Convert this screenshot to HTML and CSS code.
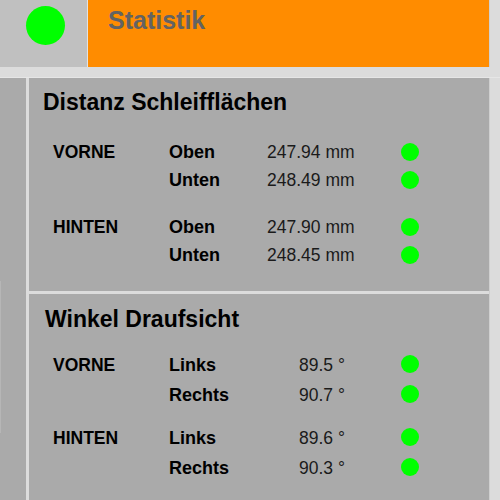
FILE: index.html
```html
<!DOCTYPE html>
<html>
<head>
<meta charset="utf-8">
<link rel="stylesheet" href="styles.css">
</head>
<body>
<div class="top">
  <div class="status"><span class="lamp"></span></div>
  <div class="title-bar"><span class="title">Statistik</span></div>
  <div class="top-rest"></div>
</div>
<div class="main">
  <div class="side"><div class="side-line"></div></div>
  <div class="panels">
    <section class="panel p1">
      <h2 class="ptitle">Distanz Schleifflächen</h2>
      <div class="group">
        <div class="row"><span class="grp">VORNE</span><span class="sub">Oben</span><span class="val">247.94 mm</span><span class="dot"></span></div>
        <div class="row"><span class="grp"></span><span class="sub">Unten</span><span class="val">248.49 mm</span><span class="dot"></span></div>
      </div>
      <div class="group">
        <div class="row"><span class="grp">HINTEN</span><span class="sub">Oben</span><span class="val">247.90 mm</span><span class="dot"></span></div>
        <div class="row"><span class="grp"></span><span class="sub">Unten</span><span class="val">248.45 mm</span><span class="dot"></span></div>
      </div>
    </section>
    <section class="panel p2">
      <h2 class="ptitle">Winkel Draufsicht</h2>
      <div class="group">
        <div class="row"><span class="grp">VORNE</span><span class="sub">Links</span><span class="val">89.5 °</span><span class="dot"></span></div>
        <div class="row"><span class="grp"></span><span class="sub">Rechts</span><span class="val">90.7 °</span><span class="dot"></span></div>
      </div>
      <div class="group">
        <div class="row"><span class="grp">HINTEN</span><span class="sub">Links</span><span class="val">89.6 °</span><span class="dot"></span></div>
        <div class="row"><span class="grp"></span><span class="sub">Rechts</span><span class="val">90.3 °</span><span class="dot"></span></div>
      </div>
    </section>
  </div>
</div>
</body>
</html>
```
FILE: styles.css
```css
html, body {
  margin: 0;
  padding: 0;
}
body {
  width: 500px;
  height: 500px;
  overflow: hidden;
  background: #dcdcdc;
  font-family: "Liberation Sans", Arial, sans-serif;
  color: #000;
}
.top {
  display: flex;
  height: 67px;
}
.status {
  width: 88px;
  background: #c0c0c0;
  border-right: 1px solid #e2e2e2;
  padding-top: 6px;
  box-sizing: border-box;
}
.lamp {
  display: block;
  width: 39px;
  height: 39px;
  margin-left: 26px;
  border-radius: 50%;
  background: #00ff00;
}
.title-bar {
  width: 401px;
  background: #ff8c00;
  padding: 5px 0 0 20px;
  box-sizing: border-box;
}
.title {
  display: block;
  font-size: 25px;
  line-height: 30px;
  font-weight: bold;
  color: #636363;
}
.top-rest {
  flex: 1;
  border-left: 1px solid #d0d0d0;
}
.main {
  display: flex;
  margin-top: 10px;
  height: 423px;
  border-top: 1px solid #e6e6e6;
  box-sizing: border-box;
  gap: 3px;
}
.side {
  width: 26px;
  background: #aaaaaa;
  position: relative;
}
.side-line {
  position: absolute;
  left: 0;
  top: 203px;
  width: 1px;
  height: 152px;
  background: #b6b6b6;
}
.panels {
  width: 460px;
  display: flex;
  flex-direction: column;
  gap: 3px;
  border-right: 1px solid #cfcfcf;
}
.panel {
  background: #aaaaaa;
  box-sizing: border-box;
}
.p1 {
  height: 213px;
  padding: 11px 0 0 14px;
}
.p2 {
  flex: 1;
  padding: 12px 0 0 16px;
}
.ptitle {
  margin: 0;
  font-size: 23px;
  line-height: 26px;
  font-weight: bold;
}
.group {
  display: flex;
  flex-direction: column;
}
.row {
  display: flex;
  align-items: center;
  height: 28px;
  font-size: 18px;
  line-height: 28px;
}
.grp {
  width: 116px;
  font-weight: bold;
  font-size: 17.5px;
}
.sub {
  font-weight: bold;
  width: 98px;
}
.val {
  width: 134px;
  font-size: 17.5px;
  color: #1a1a1a;
}
.dot {
  width: 18px;
  height: 18px;
  border-radius: 50%;
  background: #00ff00;
}
.p1 .grp { margin-left: 10px; }
.p1 .group:first-of-type { margin-top: 23px; }
.p1 .group + .group { margin-top: 19px; }
.p2 .grp { margin-left: 8px; }
.p2 .row { height: 30px; line-height: 30px; }
.p2 .sub { width: 130px; }
.p2 .val { width: 102px; }
.p2 .dot { margin-top: -3px; }
.p2 .group:first-of-type { margin-top: 18px; }
.p2 .group + .group { margin-top: 13px; }
```
